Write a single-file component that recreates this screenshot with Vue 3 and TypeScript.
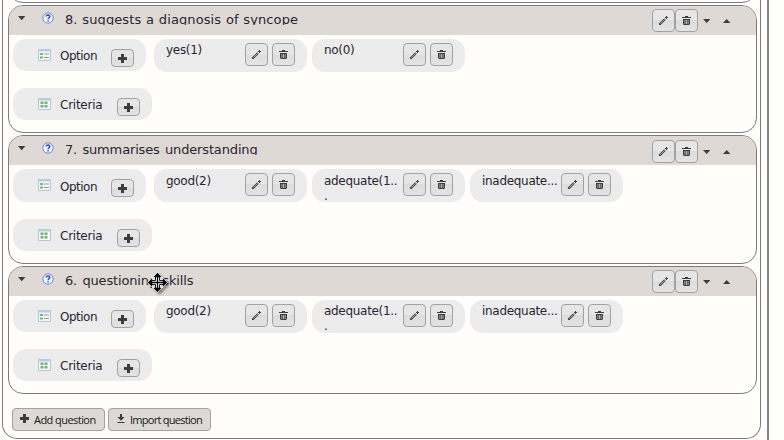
<script setup lang="ts">
interface Question { id: number; title: string; height: number; answers: string[] }

const questions: Question[] = [
  { id: 8, title: '8. suggests a diagnosis of syncope', height: 128, answers: ['yes(1)', 'no(0)'] },
  { id: 7, title: '7. summarises understanding', height: 129, answers: ['good(2)', 'adequate(1..\n.', 'inadequate...'] },
  { id: 6, title: '6. questioning skills', height: 128, answers: ['good(2)', 'adequate(1..\n.', 'inadequate...'] },
]
</script>

<template>
  <div class="page">
    <svg class="defs" width="0" height="0">
      <symbol id="pencil" viewBox="0 0 11 11">
        <path d="M1 10V8.4L6.2 3.2L7.8 4.8L2.6 10Z" fill="#444" />
        <path d="M2.4 8.6L6.8 4.2" stroke="#bbb" stroke-width=".7" />
        <path d="M8.5 1V4M7 2.5H10" stroke="#444" stroke-width="1" />
      </symbol>
      <symbol id="trash" viewBox="0 0 11 11">
        <path d="M1 2H10V3H1ZM4 1H7V2H4ZM2 4H9V9L8 10H3L2 9Z" fill="#3d3d3d" />
        <path d="M3.9 5V9M5.5 5V9M7.1 5V9" stroke="#ddd" stroke-width=".7" />
      </symbol>
      <symbol id="plus" viewBox="0 0 9 9">
        <path d="M3 0H6V3H9V6H6V9H3V6H0V3H3Z" fill="#3d3d3d" />
      </symbol>
    </svg>
    <div class="board">
      <div class="previous"><div class="previous-card"></div></div>
      <section v-for="q in questions" :key="q.id" class="card" :class="'q' + q.id" :style="{ height: q.height + 'px' }">
        <header class="head">
          <svg class="toggle" width="8" height="5"><path d="M0 0H7.4L3.7 4.3Z" fill="#3d3d3d" /></svg>
          <svg class="help" width="12" height="12" viewBox="0 0 12 12">
            <circle cx="6" cy="6" r="5.2" fill="#f2f6ff" stroke="#6a87d8" />
            <path d="M4.2 4.6C4.2 2.4 7.8 2.5 7.8 4.6C7.8 5.8 6.1 5.7 6.1 7.2M6.1 8.2V9.6" fill="none" stroke="#2448c0" stroke-width="1.5" />
          </svg>
          <h3 class="title">{{ q.title }}</h3>
          <button class="btn"><svg width="11" height="11"><use href="#pencil" /></svg></button>
          <button class="btn"><svg width="11" height="11"><use href="#trash" /></svg></button>
          <svg class="down" width="8" height="4"><path d="M0 0H7.4L3.7 4Z" fill="#3d3d3d" /></svg>
          <svg class="up" width="8" height="4"><path d="M0 4H7.4L3.7 0Z" fill="#3d3d3d" /></svg>
          <svg v-if="q.id === 6" class="move" width="21" height="21" viewBox="0 0 21 21">
            <path d="M10.5 .5L15.5 6H13V8H15V5.5L20.5 10.5L15 15.5V13H13V15H15.5L10.5 20.5L5.5 15H8V13H6V15.5L.5 10.5L6 5.5V8H8V6H5.5Z" fill="#fff" stroke="#fff" />
            <path d="M10.5 .8L14.7 5.2H6.3ZM10.5 20.2L14.7 15.8H6.3ZM.8 10.5L5.2 6.3V14.7ZM20.2 10.5L15.8 6.3V14.7Z" fill="#000" />
            <path d="M10.5 4V17M4 10.5H17" stroke="#000" stroke-width="1.3" />
            <path d="M8.5 5V8.5H5M12.5 5V8.5H16M8.5 16V12.5H5M12.5 16V12.5H16" fill="none" stroke="#000" stroke-width=".9" />
          </svg>
        </header>
        <div class="row">
          <div class="pill option">
            <svg class="kind" width="13" height="12" viewBox="0 0 13 12">
              <path d="M.5 .5H12.5V11.5H.5Z" fill="#f4f8fa" stroke="#b6c6d2" />
              <path d="M0 0H13V2.5H0Z" fill="#b5cddd" />
              <path d="M2 4H5V6H2ZM2 7.5H5V9.5H2Z" fill="#7ab272" />
              <path d="M6 5H11M6 8.5H11" stroke="#92989c" />
            </svg>
            <span class="label">Option</span>
            <button class="btn add"><svg width="9" height="9"><use href="#plus" /></svg></button>
          </div>
          <div v-for="a in q.answers" :key="a" class="pill answer">
            <span class="name">{{ a }}</span>
            <button class="btn"><svg width="11" height="11"><use href="#pencil" /></svg></button>
            <button class="btn remove"><svg width="11" height="11"><use href="#trash" /></svg></button>
          </div>
        </div>
        <div class="pill criteria">
          <svg class="kind" width="13" height="12" viewBox="0 0 13 12">
            <path d="M.5 .5H12.5V11.5H.5Z" fill="#f4f8fa" stroke="#b6c6d2" />
            <path d="M0 0H13V2.5H0Z" fill="#b5cddd" />
            <path d="M2.5 3.5H5.5V6H2.5ZM6.5 3.5H9.5V6H6.5ZM2.5 7H5.5V9.5H2.5ZM6.5 7H9.5V9.5H6.5Z" fill="#7ab272" />
          </svg>
          <span class="label">Criteria</span>
          <button class="btn add"><svg width="9" height="9"><use href="#plus" /></svg></button>
        </div>
      </section>
      <footer class="actions">
        <button class="action new"><svg width="9" height="9"><use href="#plus" /></svg><span>Add question</span></button>
        <button class="action import">
          <svg width="8" height="10" viewBox="0 0 8 10"><path d="M3 0H5V3H7.5L4 6.8L.5 3H3ZM.5 8H7.5V9H.5Z" fill="#3d3d3d" /></svg>
          <span>Import question</span>
        </button>
      </footer>
    </div>
    <div class="rail"></div>
  </div>
</template>

<style>
body { background: #fffefb; overflow: hidden; }
</style>
<style scoped>
* { box-sizing: border-box; }
.page { display: flex; width: 784px; height: 440px; overflow: hidden; font-family: "DejaVu Sans", sans-serif; font-size: 12px; color: #292631; }
.defs { position: absolute; }
svg { display: block; flex: none; }
.board { width: 759px; height: 439px; margin-left: 2px; padding: 0 3px 0 5px; border: 1px solid #7c7a80; border-top: 0; border-radius: 0 0 15px 15px; display: flex; flex-direction: column; gap: 2px; }
.rail { margin-left: 6px; flex: 1; border-left: 2px solid #858188; }
.previous { height: 3px; display: flex; align-items: flex-end; overflow: hidden; flex: none; }
.previous-card { width: 749px; height: 40px; border: 1px solid #7c7a80; border-radius: 15px; flex: none; }
.card { width: 749px; flex: none; border: 1px solid #7c7a80; border-radius: 15px; overflow: hidden; }
.head { position: relative; height: 29px; background: #dfd9d6; display: flex; align-items: flex-start; padding: 3px 25px 0 9px; }
.toggle { margin-top: 7px; }
.help { margin: 3px 11px 0 16px; }
.title { flex: 1; margin: 2px 0 0; height: 14px; line-height: 17px; overflow: hidden; font-size: 13px; font-weight: 400; white-space: nowrap; letter-spacing: -.15px; word-spacing: 1.3px; }
.q8 .title { letter-spacing: .1px; word-spacing: .5px; }
.q6 .title { height: 17px; }
.btn { width: 23px; height: 23px; padding: 0; flex: none; border: 1px solid #a2a2a4; border-radius: 4px; background: linear-gradient(#e5e6e5 50%, #dcdcdc 50%, #e4e4e4); display: flex; align-items: center; justify-content: center; }
.down { margin: 10px 12px 0 5px; }
.up { margin-top: 10px; }
.move { position: absolute; left: 138px; top: 5px; filter: drop-shadow(2px 2px 1px #0006); }
.row { display: flex; align-items: flex-start; padding: 4px 0 0 4px; height: 53px; }
.pill { background: #ececed; border-radius: 13px; display: flex; align-items: flex-start; }
.option { width: 133px; height: 32px; margin-right: 8px; }
.criteria { width: 139px; height: 32px; margin-left: 4px; }
.kind { margin: 10px 9px 0 25px; }
.label { flex: 1; margin-top: 9px; line-height: 16px; letter-spacing: -.25px; }
.option .label { letter-spacing: -.5px; }
.add { height: 18px; margin: 10px 12px 0 0; padding-top: 1px; }
.answer { width: 153px; height: 33px; margin-right: 5px; padding: 4px 12px 0; }
.name { width: 79px; height: 29px; white-space: pre; line-height: 15px; letter-spacing: -.3px; }
.remove { margin-left: 4px; }
.q7 .head .btn { margin-top: 1px; }
.q7 .down, .q7 .up { margin-top: 11px; }
.q7 .row { height: 54px; }
.q7 .option { height: 33px; }
.q7 .option .label { margin-top: 10px; }
.q7 .name { padding-top: 1px; }
.actions { display: flex; gap: 3px; padding: 12px 0 0 4px; }
.action { height: 23px; padding: 0; border: 1px solid #a2a2a0; border-radius: 4px; background: #ddd9d6; display: flex; align-items: flex-start; font: 11px/22px "Open Sans", sans-serif; letter-spacing: -.55px; color: #181818; white-space: nowrap; }
.action svg { margin-top: 5px; }
.new { width: 93px; padding-left: 7px; gap: 5px; }
.import { width: 103px; padding-left: 8px; gap: 5px; letter-spacing: -.72px; }
</style>
